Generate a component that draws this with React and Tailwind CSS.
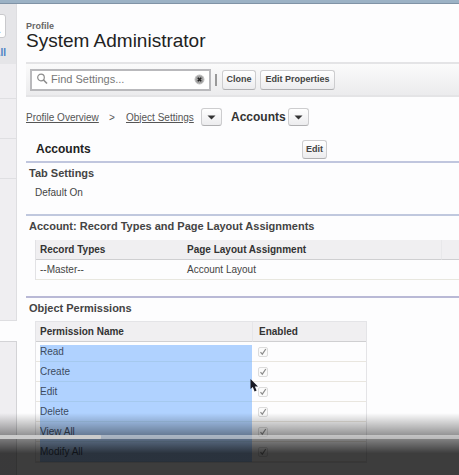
import React from "react";

const permissions = ["Read", "Create", "Edit", "Delete", "View All", "Modify All"];

const buttonStyle =
  "shrink-0 rounded-[3px] border border-[#cdcdcf] border-b-[#b0b0b2] bg-linear-to-b from-white to-[#ececee] text-[9px] font-bold text-[#444] whitespace-nowrap";

function MenuButton({ label }) {
  return (
    <button type="button" aria-label={label} className={`${buttonStyle} flex h-[18px] w-[21px] items-center justify-center`}>
      <svg width="9" height="5" viewBox="0 0 9 5" aria-hidden="true">
        <path d="M0.5 0.5H8.5L4.5 4.5Z" fill="#333" />
      </svg>
    </button>
  );
}

function Check({ id }) {
  return (
    <span className="grid h-[10px] w-[10px]">
      <input
        id={id}
        type="checkbox"
        checked
        disabled
        readOnly
        className="col-start-1 row-start-1 h-[10px] w-[10px] appearance-none rounded-[2px] border border-[#dcdcdc] bg-[#fafafa]"
      />
      <svg viewBox="0 0 10 10" className="pointer-events-none col-start-1 row-start-1 h-[10px] w-[10px]" aria-hidden="true">
        <path d="M2.5 5.2L4.3 7.2L7.8 2" fill="none" stroke="#8c8c8c" strokeWidth="1.2" />
      </svg>
    </span>
  );
}

function Sidebar() {
  return (
    <aside className="flex w-[17px] shrink-0 flex-col overflow-hidden">
      <div className="flex h-[317px] flex-col border-r border-b border-[#dedee1] bg-[#efeef1]">
        <div className="flex h-[60px] flex-col items-end overflow-hidden bg-[#e5e5e8] pt-[10px] pr-[10px]">
          <div className="flex h-6 w-10 shrink-0 items-end justify-end rounded-[3px] border border-[#c9c9cc] bg-white pr-1 text-[10px] leading-[14px] text-[#666]">
            .
          </div>
          <a href="#all" className="mt-2 shrink-0 text-[10px] leading-[14px] font-bold whitespace-nowrap text-[#4a7fc4]">
            All
          </a>
        </div>
        <div className="h-[35px] border-b border-[#dfdfe2]" />
        <div className="h-10 border-b border-[#dfdfe2]" />
        <div className="h-10 border-b border-[#dfdfe2]" />
      </div>
      <div className="mt-5 flex-1 border-t border-r border-[#d3d3d6] bg-[#efeef1]" />
    </aside>
  );
}

export default function App() {
  return (
    <div className="relative flex min-h-screen flex-col overflow-hidden bg-[#fdfdfe] font-['Liberation_Sans',Arial,sans-serif] text-[11px] text-[#444]">
      <div className="h-1 shrink-0 border-b border-[#8093a6] bg-[#9cb2c5]" />
      <div className="flex flex-1">
        <Sidebar />
        <main className="min-w-0 flex-1 overflow-hidden pt-4 pb-3 pl-[9px]">
          <p className="text-[9px] leading-3 font-bold text-[#666]">Profile</p>
          <h1 className="text-[19px] leading-[18px] whitespace-nowrap text-[#222]">System Administrator</h1>

          <div className="mt-3 flex h-[35px] items-center border-y-2 border-[#e4e4e6] bg-linear-to-b from-[#fbfbfb] to-[#ebebed] pl-1">
            <label className="flex h-[22px] w-[181px] shrink-0 items-center border-2 border-[#b9b9bc] bg-white pl-1">
              <svg width="13" height="13" viewBox="0 0 13 13" fill="none" stroke="#8c8c8c" aria-hidden="true">
                <circle cx="5" cy="4.5" r="3.3" strokeWidth="1.2" />
                <path d="M7.5 7L11 10.5" strokeWidth="1.6" />
              </svg>
              <input
                type="text"
                aria-label="Find Settings"
                placeholder="Find Settings..."
                className="ml-[2px] min-w-0 flex-1 bg-transparent text-[11px] outline-none placeholder:text-[#777]"
              />
              <button type="button" aria-label="Clear search" className="mr-1">
                <svg width="11" height="11" viewBox="0 0 11 11" aria-hidden="true">
                  <circle cx="5.5" cy="5.5" r="4.5" fill="#a2a2a2" stroke="#c2c2c2" />
                  <path d="M3.8 3.8L7.2 7.2M7.2 3.8L3.8 7.2" stroke="#222" strokeWidth="1.6" />
                </svg>
              </button>
            </label>
            <span className="ml-1 h-3 w-[2px] shrink-0 bg-[#999]" />
            <button type="button" className={`${buttonStyle} ml-[5px] h-5 w-[34px]`}>Clone</button>
            <button type="button" className={`${buttonStyle} ml-1 h-5 w-[75px]`}>Edit Properties</button>
          </div>

          <nav className="mt-[11px] flex h-[18px] items-center text-[10px] whitespace-nowrap text-[#555]">
            <a href="#overview" className="w-[75px] underline">Profile Overview</a>
            <span className="w-[25px] pl-2">&gt;</span>
            <a href="#objects" className="mr-[5px] w-[70px] underline">Object Settings</a>
            <MenuButton label="Object Settings menu" />
            <span className="mr-[2px] ml-[9px] text-[12px] font-bold text-[#333]">Accounts</span>
            <MenuButton label="Accounts menu" />
          </nav>

          <div className="mt-[14px] flex h-[21px] items-start pl-[10px]">
            <h2 className="w-[266px] text-[12px] leading-[18px] font-bold text-[#222]">Accounts</h2>
            <button type="button" className={`${buttonStyle} h-[19px] w-[25px]`}>Edit</button>
          </div>

          <section className="h-[53px] border-t-2 border-[#c0c6de] pt-[2px] pl-[3px]">
            <h3 className="text-[11px] leading-4 font-bold">Tab Settings</h3>
            <p className="mt-1 pl-[6px] text-[10px] leading-4">Default On</p>
          </section>

          <section className="h-[82px] border-t-2 border-[#c0c8de] pt-[2px]">
            <h3 className="pl-[3px] text-[11px] leading-4 font-bold whitespace-nowrap">
              Account: Record Types and Page Layout Assignments
            </h3>
            <div className="mt-[6px] pl-[9px]">
              <table className="w-full table-fixed border-separate border-spacing-0 border-l border-[#e2e2e5] text-left text-[10px] leading-[14px]">
                <thead className="bg-[#f0eff1] text-[#333]">
                  <tr className="h-5">
                    <th scope="col" className="w-[147px] border-b border-[#cfcfd1] pl-1">Record Types</th>
                    <th scope="col" className="border-b border-[#cfcfd1] pl-1">Page Layout Assignment</th>
                    <th className="w-[18px] border-b border-l border-b-[#cfcfd1] border-l-[#e8e8ea]" />
                  </tr>
                </thead>
                <tbody>
                  <tr className="h-5">
                    <td className="border-b border-[#e8e7df] pl-1">--Master--</td>
                    <td className="border-b border-[#e8e7df] pl-1">Account Layout</td>
                    <td className="border-b border-[#e8e7df]" />
                  </tr>
                </tbody>
              </table>
            </div>
          </section>

          <section className="border-t-2 border-[#b9b9d6] pt-[2px]">
            <h3 className="pl-[3px] text-[11px] leading-4 font-bold">Object Permissions</h3>
            <div className="mt-[5px] pl-[9px]">
              <table className="w-[332px] table-fixed border-separate border-spacing-0 border border-[#e4e4e7] text-left text-[10px] leading-[14px]">
                <thead className="bg-[#f0eff1] text-[#333]">
                  <tr className="h-5">
                    <th scope="col" className="w-[216px] border-b border-[#cfcfd1] pl-1">Permission Name</th>
                    <th scope="col" className="border-b border-l border-b-[#cfcfd1] border-l-[#e6e6e9] pl-[6px]">Enabled</th>
                  </tr>
                </thead>
                <tbody>
                  {permissions.map((name) => (
                    <tr key={name} className="group h-5">
                      <td className="border-b border-[#e9e6df] p-0 pl-1">
                        <label
                          htmlFor={`permission-${name}`}
                          className="-mb-px block h-5 bg-[#b0d2ff] pt-px leading-[18px] text-[#3c4b60] shadow-[inset_0_-1px_0_#a5c9ee] group-first:shadow-[inset_0_3px_0_#fdfdfe,inset_0_-1px_0_#a5c9ee]"
                        >
                          {name}
                        </label>
                      </td>
                      <td className="border-b border-[#e9e6df] p-0 pl-[6px]">
                        <Check id={`permission-${name}`} />
                      </td>
                    </tr>
                  ))}
                </tbody>
              </table>
            </div>
          </section>
        </main>
      </div>

      <div className="pointer-events-none absolute top-[378px] left-[249px]">
        <svg width="10" height="15" viewBox="0 0 10 15" aria-hidden="true">
          <path d="M1.5 1V11L3.8 9L5.6 13.4L7.6 12.6L5.8 8.5H9Z" fill="#1a1a24" />
        </svg>
      </div>

      <div className="absolute inset-x-0 bottom-0 h-[62px] bg-linear-to-b from-black/0 to-black/76 to-65%">
        <div
          role="progressbar"
          aria-label="Playback position"
          aria-valuenow={22}
          aria-valuemin={0}
          aria-valuemax={100}
          className="mt-[22px] h-1 bg-white/45"
        >
          <div className="h-full w-[22%] rounded-r-[1px] bg-[#cbcbcb]" />
        </div>
      </div>
    </div>
  );
}
